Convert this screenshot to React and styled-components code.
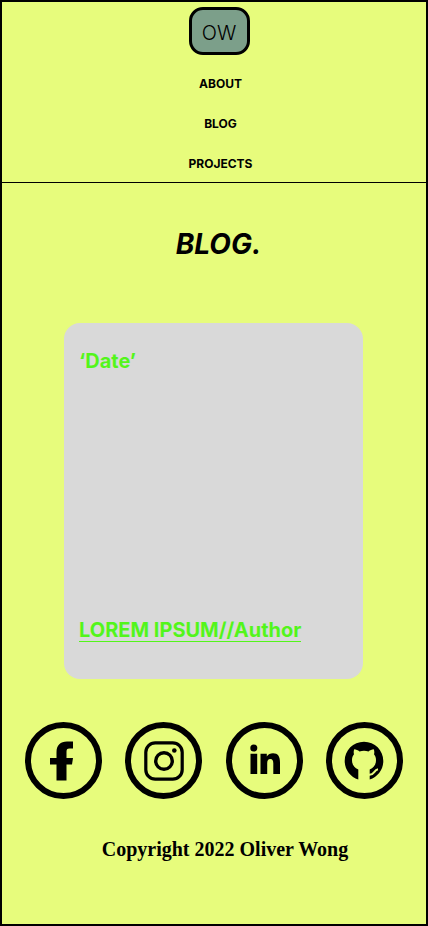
import React from "react";
import styled, { createGlobalStyle } from "styled-components";

const GlobalStyle = createGlobalStyle`
  *, *::before, *::after { box-sizing: border-box; }
  body { margin: 0; background: #e7fc7c; }
  a { color: inherit; text-decoration: none; }
`;

const Page = styled.div`
  display: flex;
  flex-direction: column;
  min-height: 100vh;
  border: 2px solid #000;
  background: #e7fc7c;
  color: #000;
  font-family: Inter, sans-serif;
`;

const Header = styled.header`
  display: flex;
  flex-direction: column;
  align-items: center;
  padding: 5px 0 10px 10px;
  border-bottom: 1px solid #000;
`;

const Logo = styled.a`
  display: flex;
  align-items: center;
  justify-content: center;
  width: 61px;
  height: 48px;
  padding-top: 4px;
  border: 3px solid #000;
  border-radius: 14px;
  background: #7c9f8a;
  font-size: 20px;
  font-weight: 300;
  line-height: 24px;
`;

const Nav = styled.nav`
  display: flex;
  flex-direction: column;
  align-items: center;
  gap: 24px;
  margin-top: 21px;
  padding-left: 3px;
`;

const NavLink = styled.a`
  font-size: 12px;
  font-weight: 700;
  line-height: 16px;
`;

const Main = styled.main`
  display: flex;
  flex-direction: column;
  padding: 43px 63px 0 62px;
`;

const Title = styled.h1`
  margin: 0;
  padding-left: 10px;
  font-size: 28px;
  font-style: italic;
  font-weight: 700;
  line-height: 36px;
  text-align: center;
`;

const Card = styled.article`
  display: flex;
  flex-direction: column;
  justify-content: space-between;
  align-items: flex-start;
  min-height: 356px;
  margin-top: 61px;
  padding: 26px 15px 37px;
  border-radius: 16px;
  background: #d9d9d9;
  color: #53f51b;
  font-size: 20px;
  font-weight: 700;
  line-height: 24px;
`;

const PostLink = styled.a`
  border-bottom: 1px solid currentColor;
  line-height: 22px;
`;

const Footer = styled.footer`
  padding: 43px 23px 60px;
`;

const Socials = styled.div`
  display: flex;
  justify-content: space-between;
`;

const SocialLink = styled.a`
  display: flex;
  align-items: center;
  justify-content: center;
  width: 77px;
  height: 77px;
  border: 6px solid #000;
  border-radius: 50%;
`;

const Icon = styled.svg`
  display: block;
  width: 40px;
  height: 40px;
`;

const Copyright = styled.p`
  margin: 38px 0 0;
  padding-left: 22px;
  font: 700 20px/24px "Liberation Serif", serif;
  text-align: center;
`;

const navItems = ["About", "Blog", "Projects"];

const socials = [
  {
    name: "Facebook",
    art: (
      <path d="M12.500 39.500V23.500H6V17H12.500V11.500C12.500 4 16.500 .5 23 .5H29V7.500H25.500C23 7.500 22.500 8.500 22.500 11V17H29L28 23.500H22.500V39.500Z" />
    ),
  },
  {
    name: "Instagram",
    art: (
      <>
        <rect x="1.800" y="1.800" width="36.400" height="36.400" rx="9.500" fill="none" stroke="#000" strokeWidth="3.200" />
        <circle cx="20" cy="20" r="8.300" fill="none" stroke="#000" strokeWidth="3.400" />
        <circle cx="30.300" cy="9.500" r="2.300" />
      </>
    ),
  },
  {
    name: "LinkedIn",
    art: (
      <>
        <circle cx="9.800" cy="7" r="3.500" />
        <path d="M6.500 12.800H13.200V33H6.500ZM16.500 12.800H22.800V15.500C24.300 13.300 26.300 12.300 29 12.300C34 12.300 36 15.500 36 21.500V33H29.300V22.500C29.300 19.500 28.500 18 26.300 18C24 18 23.200 19.500 23.200 22.500V33H16.500Z" />
      </>
    ),
  },
  {
    name: "GitHub",
    art: (
      <>
        <path d="M20 .7C9.200.700.700 9.200.700 20c0 8.700 5.700 16 13.600 18.500V28.600c-4-2-6.300-4.500-6.300-9.600 0-2.500.8-4.300 2-5.800-.5-1.500-.4-3.200.2-4.900 2 .1 3.700 1 5.300 2.100 3-.8 6-.8 9 0 1.600-1.100 3.300-2 5.300-2.100.6 1.700.7 3.400.2 4.900 1.200 1.500 2 3.300 2 5.800 0 5.100-2.300 7.600-6.300 9.600v9.900C33.600 36 39.300 28.700 39.300 20 39.300 9.200 30.800.7 20 .7Z" />
        <path d="M24.500 33.700C30.500 34.800 29.500 29 34 28.300" fill="none" stroke="#e7fc7c" strokeWidth="2" />
      </>
    ),
  },
];

export default function App() {
  return (
    <Page>
      <GlobalStyle />
      <Header>
        <Logo href="#">OW</Logo>
        <Nav>
          {navItems.map((item) => (
            <NavLink key={item} href={`#${item.toLowerCase()}`}>
              {item.toUpperCase()}
            </NavLink>
          ))}
        </Nav>
      </Header>
      <Main>
        <Title>BLOG.</Title>
        <Card>
          <time>‘Date’</time>
          <PostLink href="#post">LOREM IPSUM//Author</PostLink>
        </Card>
      </Main>
      <Footer>
        <Socials>
          {socials.map(({ name, art }) => (
            <SocialLink key={name} href={`#${name.toLowerCase()}`} aria-label={name}>
              <Icon viewBox="0 0 40 40" aria-hidden="true">{art}</Icon>
            </SocialLink>
          ))}
        </Socials>
        <Copyright>Copyright 2022 Oliver Wong</Copyright>
      </Footer>
    </Page>
  );
}
